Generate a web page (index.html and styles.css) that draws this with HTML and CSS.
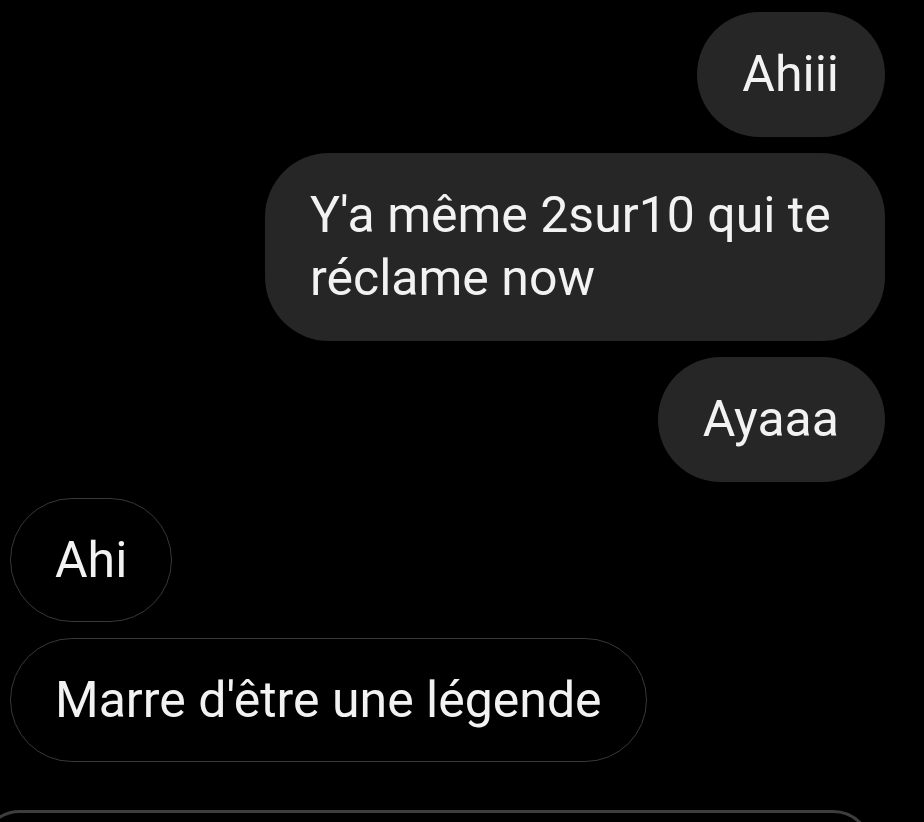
FILE: index.html
```html
<!DOCTYPE html>
<html lang="fr">
<head>
<meta charset="utf-8">
<title>Conversation</title>
<link rel="stylesheet" href="styles.css">
</head>
<body>
<main class="chat">
  <div class="msg sent">Ahiii</div>
  <div class="msg sent">Y'a même 2sur10 qui te réclame now</div>
  <div class="msg sent">Ayaaa</div>
  <div class="msg recv">Ahi</div>
  <div class="msg recv">Marre d'être une légende</div>
  <div class="composer"></div>
</main>
</body>
</html>
```

FILE: styles.css
```css
html, body {
  margin: 0;
  padding: 0;
  background: #000;
  height: 822px;
  overflow: hidden;
}

.chat {
  display: flex;
  flex-direction: column;
  gap: 16px;
  padding-top: 12px;
  font-family: Roboto, "Noto Sans", sans-serif;
  font-size: 50px;
  line-height: 63px;
  color: #f2f2f2;
}

.msg {
  box-sizing: border-box;
  border-radius: 64px;
  max-width: 620px;
}

.sent {
  align-self: flex-end;
  margin-right: 39px;
  background: #262626;
  padding: 31px 46px 31px 45px;
}

.recv {
  align-self: flex-start;
  margin-left: 10px;
  max-width: 700px;
  border: 1.5px solid #383838;
  padding: 29.5px 44px;
}

.composer {
  margin-top: 32px;
  margin-left: -20px;
  width: 893px;
  height: 80px;
  box-sizing: border-box;
  border: 3px solid #3d3d3d;
  border-radius: 53px;
}
```
